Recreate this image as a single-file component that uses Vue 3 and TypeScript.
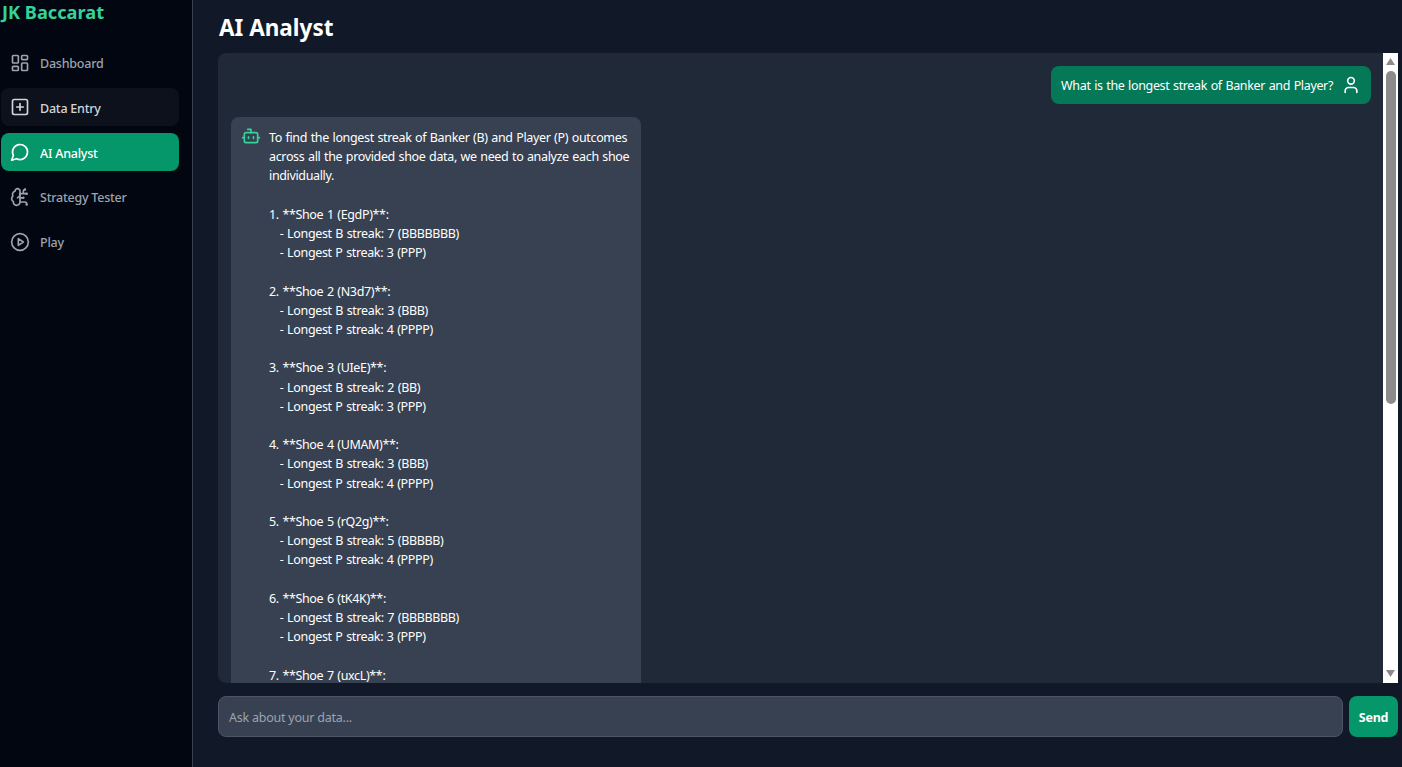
<script setup lang="ts">
type NavItem = { label: string; icon: string }

const navItems: NavItem[] = [
  { label: 'Dashboard', icon: 'dashboard' },
  { label: 'Data Entry', icon: 'plus' },
  { label: 'AI Analyst', icon: 'chat' },
  { label: 'Strategy Tester', icon: 'brain' },
  { label: 'Play', icon: 'play' },
]

const activeItem = 'AI Analyst'
const hoverItem = 'Data Entry'

const shoes: [string, string, string][] = [
  ['EgdP', '7 (BBBBBBB)', '3 (PPP)'],
  ['N3d7', '3 (BBB)', '4 (PPPP)'],
  ['UIeE', '2 (BB)', '3 (PPP)'],
  ['UMAM', '3 (BBB)', '4 (PPPP)'],
  ['rQ2g', '5 (BBBBB)', '4 (PPPP)'],
  ['tK4K', '7 (BBBBBBB)', '3 (PPP)'],
]

let answer =
  'To find the longest streak of Banker (B) and Player (P) outcomes across all the provided shoe data, we need to analyze each shoe individually.\n\n'
shoes.forEach((s, i) => {
  answer += `${i + 1}. **Shoe ${i + 1} (${s[0]})**:\n   - Longest B streak: ${s[1]}\n   - Longest P streak: ${s[2]}\n\n`
})
answer += '7. **Shoe 7 (uxcL)**:'
</script>

<template>
  <div class="layout">
    <aside class="sidebar">
      <h1 class="logo">JK Baccarat</h1>
      <nav class="nav">
        <a
          v-for="item in navItems"
          :key="item.label"
          class="nav-item"
          :class="{ active: item.label === activeItem, hover: item.label === hoverItem }"
        >
          <svg class="nav-icon" viewBox="0 0 24 24">
            <template v-if="item.icon === 'dashboard'">
              <rect x="3" y="3" width="7" height="9" rx="1" />
              <rect x="14" y="3" width="7" height="5" rx="1" />
              <rect x="14" y="12" width="7" height="9" rx="1" />
              <rect x="3" y="16" width="7" height="5" rx="1" />
            </template>
            <template v-else-if="item.icon === 'plus'">
              <rect x="3" y="3" width="18" height="18" rx="2" />
              <path d="M8 12h8M12 8v8" />
            </template>
            <template v-else-if="item.icon === 'chat'">
              <path d="M7.9 20A9 9 0 1 0 4 16.1L2 22Z" />
            </template>
            <template v-else-if="item.icon === 'brain'">
              <path d="M12 5a3 3 0 1 0-5.997.125 4 4 0 0 0-2.526 5.77 4 4 0 0 0 .556 6.588A4 4 0 1 0 12 18Z" />
              <path d="M9 13a4.5 4.5 0 0 0 3-4" />
              <path d="M12 13h4M12 18h6a2 2 0 0 1 2 2v1M12 8h8M16 8V5a2 2 0 0 1 2-2" />
              <circle cx="16" cy="13" r=".5" />
              <circle cx="18" cy="3" r=".5" />
              <circle cx="20" cy="21" r=".5" />
              <circle cx="20" cy="8" r=".5" />
            </template>
            <template v-else>
              <circle cx="12" cy="12" r="10" />
              <path d="m10 8 6 4-6 4Z" />
            </template>
          </svg>
          <span class="nav-label">{{ item.label }}</span>
        </a>
      </nav>
    </aside>

    <main class="main">
      <h2 class="title">AI Analyst</h2>
      <div class="chat-wrap">
        <div class="chat">
          <div class="row row-user">
            <div class="bubble bubble-user">
              <p class="text">What is the longest streak of Banker and Player?</p>
              <svg class="msg-icon" viewBox="0 0 24 24">
                <path d="M19 21v-2a4 4 0 0 0-4-4H9a4 4 0 0 0-4 4v2" />
                <circle cx="12" cy="7" r="4" />
              </svg>
            </div>
          </div>
          <div class="row">
            <div class="bubble bubble-bot">
              <svg class="msg-icon bot-icon" viewBox="0 0 24 24">
                <path d="M12 8V4H8" />
                <rect x="4" y="8" width="16" height="12" rx="2" />
                <path d="M2 14h2M20 14h2M15 13v2M9 13v2" />
              </svg>
              <p class="text">{{ answer }}</p>
            </div>
          </div>
        </div>
        <div class="scrollbar">
          <svg class="arrow" viewBox="0 0 9 7"><path d="M4.5 0 9 7H0z" /></svg>
          <div class="track"><div class="thumb"></div></div>
          <svg class="arrow" viewBox="0 0 9 7"><path d="M4.5 7 0 0h9z" /></svg>
        </div>
      </div>
      <form class="composer" @submit.prevent>
        <input class="composer-input" type="text" placeholder="Ask about your data..." />
        <button class="send" type="submit">Send</button>
      </form>
    </main>
  </div>
</template>

<style>
html,
body {
  margin: 0;
  overflow: hidden;
}
</style>

<style scoped>
.layout {
  display: flex;
  height: 767px;
  font-family: "Noto Sans", "Open Sans", sans-serif;
  letter-spacing: -0.23px;
  background: #111827;
  color: #fff;
}

.sidebar {
  width: 193px;
  flex: none;
  box-sizing: border-box;
  background: #020610;
  border-right: 1px solid #374151;
  padding: 0 13px 0 1px;
}

.logo {
  margin: 0;
  padding-left: 1px;
  font-size: 18.2px;
  line-height: 25px;
  font-weight: 700;
  letter-spacing: 0;
  color: #34d399;
}

.nav {
  display: flex;
  flex-direction: column;
  gap: 6.75px;
  margin-top: 18.5px;
}

.nav-item {
  display: flex;
  align-items: center;
  gap: 10px;
  height: 38px;
  padding: 0 10px 0 9px;
  border-radius: 8px;
  font-size: 12.5px;
  font-weight: 500;
  color: #9ca3af;
}

.nav-item.hover {
  background: #0d111b;
  color: #d1d5db;
}

.nav-item.active {
  background: #059669;
  color: #fff;
}

.nav-label {
  margin-top: 2px;
}

.nav-icon {
  width: 20px;
  height: 20px;
  fill: none;
  stroke: currentColor;
  stroke-width: 2;
  stroke-linecap: round;
  stroke-linejoin: round;
}

.main {
  flex: 1;
  min-width: 0;
  display: flex;
  flex-direction: column;
  padding: 0 4px 30px 25px;
}

.title {
  margin: 0;
  padding-left: 1px;
  height: 53px;
  font-size: 22.5px;
  line-height: 56px;
  font-weight: 700;
  letter-spacing: 0;
}

.chat-wrap {
  flex: 1;
  min-height: 0;
  display: flex;
}

.chat {
  flex: 1;
  min-width: 0;
  display: flex;
  flex-direction: column;
  gap: 13px;
  box-sizing: border-box;
  padding: 13px 12px 0 13px;
  background: #1f2937;
  border-radius: 8px 0 0 8px;
  overflow: hidden;
}

.scrollbar {
  width: 15px;
  flex: none;
  display: flex;
  flex-direction: column;
  align-items: center;
  background: #fff;
}

.arrow {
  width: 9px;
  height: 7px;
  margin: 5px 0 6px;
  flex: none;
  fill: #8b8b8b;
}

.track {
  flex: 1;
  width: 100%;
  box-sizing: border-box;
  padding: 0 2px 0 3px;
}

.thumb {
  height: 333px;
  background: #8b8b8b;
  border-radius: 6px;
}

.row {
  display: flex;
  flex: none;
}

.row-user {
  justify-content: flex-end;
}

.bubble {
  display: flex;
  gap: 8px;
  padding: 9px 10px;
  border-radius: 8px;
  font-size: 12.5px;
}

.bubble-user {
  height: 38px;
  box-sizing: border-box;
  background: #047857;
  align-items: center;
}

.bubble-bot {
  width: 410px;
  box-sizing: border-box;
  background: #374151;
}

.text {
  margin: 0;
  padding-top: 2px;
  line-height: 19.2px;
  letter-spacing: -0.35px;
  word-spacing: 0.7px;
  white-space: pre-wrap;
}

.msg-icon {
  width: 20px;
  height: 20px;
  flex: none;
  fill: none;
  stroke: currentColor;
  stroke-width: 2;
  stroke-linecap: round;
  stroke-linejoin: round;
}

.bot-icon {
  color: #34d399;
}

.composer {
  display: flex;
  gap: 6px;
  margin-top: 13px;
  height: 41px;
  flex: none;
}

.composer-input {
  flex: 1;
  min-width: 0;
  box-sizing: border-box;
  padding: 2px 10px 0;
  background: #374151;
  border: 1px solid #4b5563;
  border-radius: 8px;
  font: inherit;
  font-size: 12.5px;
  letter-spacing: inherit;
  color: #fff;
  outline: none;
}

.composer-input::placeholder {
  color: #9ca3af;
}

.send {
  width: 49px;
  padding: 2px 0 0;
  background: #059669;
  border: 0;
  border-radius: 8px;
  font: inherit;
  font-size: 12.5px;
  font-weight: 700;
  letter-spacing: inherit;
  color: #fff;
}
</style>
